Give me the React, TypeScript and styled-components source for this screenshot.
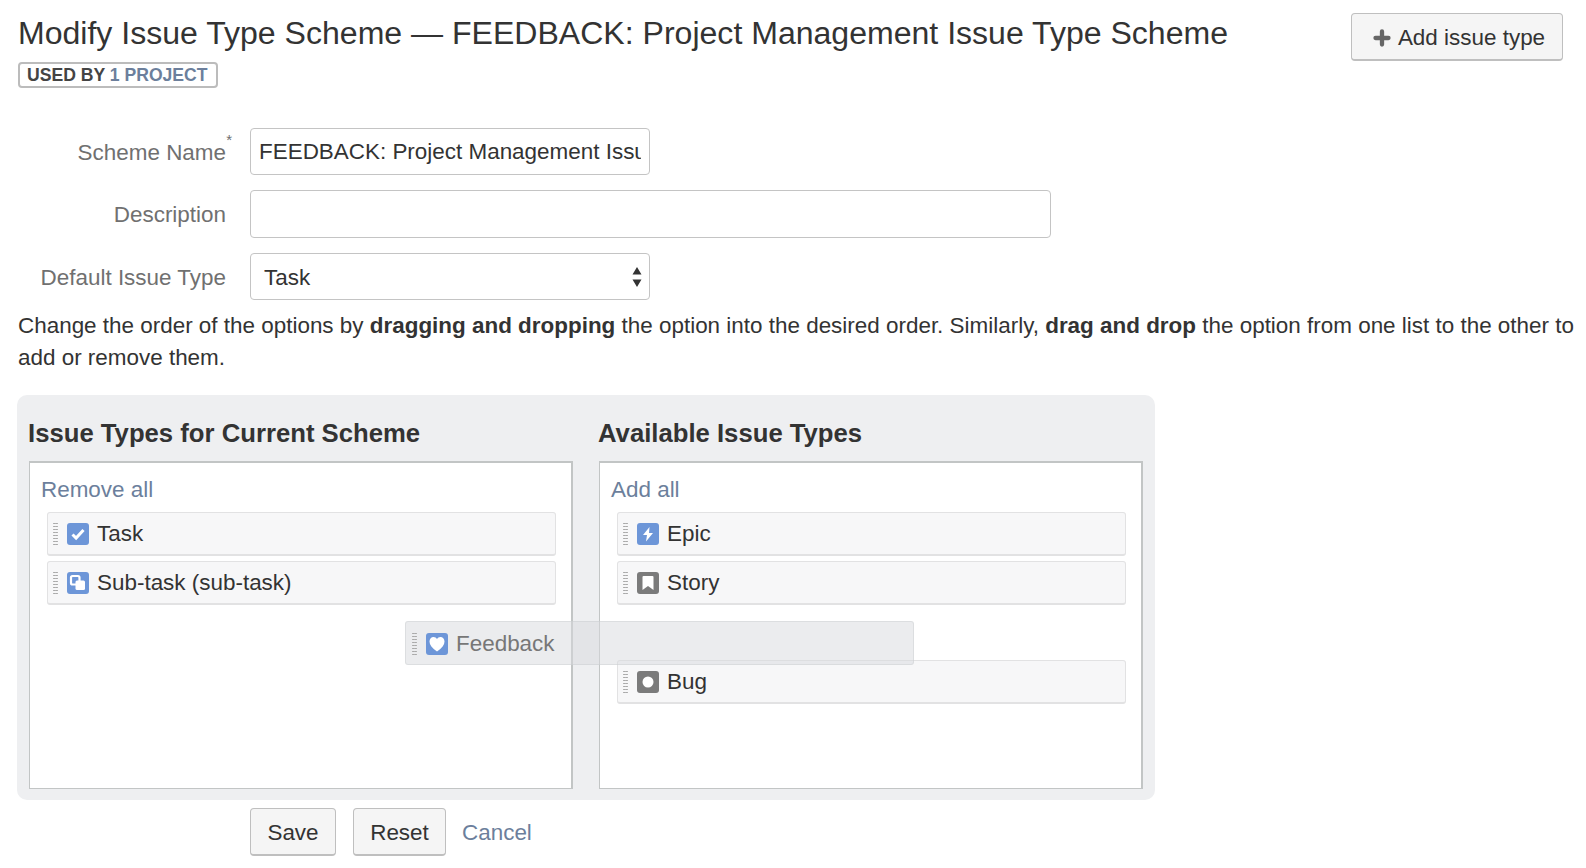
import React from "react";
import styled, { createGlobalStyle } from "styled-components";

const Global = createGlobalStyle`
  html, body { margin: 0; padding: 0; background: #fff; }
  body { font-family: "Liberation Sans", Arial, sans-serif; font-size: 22.45px; line-height: 32px; color: #333; }
  * { box-sizing: border-box; }
`;

const Page = styled.div`
  width: 1586px;
  height: 868px;
  overflow: hidden;
  padding: 13px 8px 0 17px;
`;

const Header = styled.header`
  display: flex;
  justify-content: space-between;
  align-items: flex-start;
  height: 88px;
  margin-right: 15px;
`;

const TitleBlock = styled.div`
  display: flex;
  flex-direction: column;
  align-items: flex-start;
`;

const Title = styled.h1`
  margin: 0 0 0 1px;
  font-size: 32.05px;
  line-height: 40px;
  font-weight: 400;
  color: #333;
`;

const Badge = styled.div`
  margin: 9px 0 0 1px;
  height: 26px;
  width: 200px;
  border: 2px solid #bcbcbc;
  border-radius: 4px;
  font-size: 17.6px;
  line-height: 22px;
  font-weight: 700;
  padding-left: 7px;
  color: #444;
  white-space: nowrap;
`;

const BadgeLink = styled.span`
  color: #6c7f9c;
`;

const Button = styled.button<{ $w: number }>`
  width: ${(p) => p.$w}px;
  height: 48px;
  border: 1px solid #bfbfbf;
  border-bottom-width: 2px;
  border-radius: 4px;
  background: #f5f5f5;
  font: 400 22.45px "Liberation Sans", Arial, sans-serif;
  color: #333;
  padding: 2px 0 0;
  display: inline-flex;
  align-items: center;
  justify-content: center;
  gap: 7px;
`;

const AddButton = styled(Button)`
  padding-left: 4px;
`;

const Form = styled.form`
  margin-top: 27px;
  display: grid;
  grid-template-columns: 209px auto;
  column-gap: 24px;
  row-gap: 15px;
  justify-content: start;
`;

const Label = styled.label`
  text-align: right;
  height: 47px;
  line-height: 49px;
  color: #707070;
  position: relative;
  white-space: nowrap;
`;

const Star = styled.sup`
  position: absolute;
  right: -6px;
  top: 0;
  font-size: 15px;
  line-height: 24px;
  vertical-align: baseline;
`;

const TextInput = styled.input<{ $w: number; $h: number }>`
  width: ${(p) => p.$w}px;
  height: ${(p) => p.$h}px;
  border: 1px solid #c4c4c4;
  border-radius: 4px;
  background: #fff;
  padding: 1px 8px 0;
  font: 400 22.45px "Liberation Sans", Arial, sans-serif;
  color: #333;
  outline: none;
`;

const SelectWrap = styled.div`
  position: relative;
  width: 400px;
  height: 47px;
`;

const Select = styled.select`
  width: 100%;
  height: 100%;
  appearance: none;
  border: 1px solid #c4c4c4;
  border-radius: 4px;
  background: #fff;
  padding: 1px 0 0 13px;
  font: 400 22.45px "Liberation Sans", Arial, sans-serif;
  color: #333;
  outline: none;
`;

const Arrows = styled.svg`
  position: absolute;
  right: 7px;
  top: 13px;
  pointer-events: none;
`;

const Help = styled.p`
  margin: 10px 0 0 1px;
  line-height: 32px;
  color: #333;
`;

const Panel = styled.section`
  position: relative;
  margin-top: 21px;
  width: 1138px;
  height: 405px;
  background: #eeeff1;
  border-radius: 10px;
  padding: 0 12px;
  display: grid;
  grid-template-columns: 544px 544px;
  column-gap: 26px;
`;

const Column = styled.div`
  display: flex;
  flex-direction: column;
`;

const ColumnTitle = styled.h2`
  margin: 0 0 0 -1px;
  height: 66px;
  padding-top: 22px;
  font-size: 25.7px;
  line-height: 32px;
  font-weight: 700;
  color: #333;
`;

const ListBox = styled.div`
  height: 328px;
  background: #fff;
  border-style: solid;
  border-color: #c2c5c5;
  border-width: 2px 2px 1px 1px;
  padding: 12px 15px 0 17px;
`;

const BulkLink = styled.a`
  display: block;
  margin-left: -6px;
  height: 37px;
  line-height: 30px;
  color: #6c7f9c;
`;

const Item = styled.div<{ $after?: number }>`
  height: 44px;
  margin-bottom: ${(p) => p.$after ?? 5}px;
  background: #f7f7f8;
  border: 1px solid #e2e2e3;
  border-bottom-width: 2px;
  border-radius: 3px;
  display: flex;
  align-items: center;
  padding: 1px 0 0 5px;
  color: #333;
`;

const Handle = styled.span`
  width: 5px;
  height: 24px;
  margin-right: 9px;
  background-image: radial-gradient(circle, #a5a5a5 0.8px, transparent 1px);
  background-size: 2.5px 3px;
`;

const IconBox = styled.svg`
  flex: none;
  margin-right: 8px;
`;

const Dragged = styled.div`
  position: absolute;
  left: 388px;
  top: 226px;
  width: 509px;
  height: 44px;
  background: rgba(215, 217, 221, 0.5);
  border: 1px solid rgba(200, 202, 206, 0.4);
  border-radius: 3px;
  display: flex;
  align-items: center;
  padding: 1px 0 0 6px;
  color: #777;
`;

const Actions = styled.div`
  margin: 8px 0 0 233px;
  display: flex;
  align-items: center;
`;

const ResetButton = styled(Button)`
  margin-left: 17px;
`;

const CancelLink = styled.a`
  margin-left: 16px;
  padding-top: 1px;
  color: #6c7f9c;
`;

const BLUE = "#6d96d8";
const GREY = "#7b7b7b";

const Icon: React.FC<{ fill: string; children: React.ReactNode }> = ({ fill, children }) => (
  <IconBox width="22" height="22" viewBox="0 0 22 22">
    <rect width="22" height="22" rx="3" fill={fill} />
    {children}
  </IconBox>
);

const TaskIcon = () => (
  <Icon fill={BLUE}>
    <path d="M5.5 11.5l3.6 3.6L16.5 7" fill="none" stroke="#fff" strokeWidth="3" />
  </Icon>
);
const SubtaskIcon = () => (
  <Icon fill={BLUE}>
    <rect x="4" y="4" width="8.5" height="8.5" rx="1.5" fill="none" stroke="#fff" strokeWidth="2.2" />
    <rect x="8.5" y="8.5" width="9.5" height="9.5" rx="1.5" fill="#fff" />
  </Icon>
);
const EpicIcon = () => (
  <Icon fill={BLUE}>
    <path d="M12.5 4L6 12h4l-1 6.5L16 10h-4z" fill="#fff" />
  </Icon>
);
const StoryIcon = () => (
  <Icon fill={GREY}>
    <path d="M6.5 4h9a1 1 0 0 1 1 1v13L11 14l-5.5 4V5a1 1 0 0 1 1-1z" fill="#fff" />
  </Icon>
);
const BugIcon = () => (
  <Icon fill={GREY}>
    <circle cx="11" cy="11" r="5.5" fill="#fff" />
  </Icon>
);
const HeartIcon = () => (
  <Icon fill={BLUE}>
    <path d="M11 18.5C6 15 3.5 12 3.5 8.5 3.5 6 5.3 4 7.6 4 9 4 10.3 4.8 11 6c.7-1.2 2-2 3.4-2 2.3 0 4.1 2 4.1 4.500 0 3.500-2.500 6.500-7.500 10z" fill="#fff" />
  </Icon>
);

const Row: React.FC<{ icon: React.ReactNode; label: string; after?: number }> = ({ icon, label, after }) => (
  <Item $after={after}>
    <Handle />
    {icon}
    {label}
  </Item>
);

export default function App() {
  return (
    <Page>
      <Global />
      <Header>
        <TitleBlock>
          <Title>Modify Issue Type Scheme — FEEDBACK: Project Management Issue Type Scheme</Title>
          <Badge>
            USED BY <BadgeLink>1 PROJECT</BadgeLink>
          </Badge>
        </TitleBlock>
        <AddButton type="button" $w={212}>
          <svg width="18" height="18" viewBox="0 0 18 18">
            <path d="M9 2.5v13M2.5 9h13" stroke="#666" strokeWidth="4.3" strokeLinecap="round" />
          </svg>
          Add issue type
        </AddButton>
      </Header>

      <Form>
        <Label>
          Scheme Name<Star>*</Star>
        </Label>
        <TextInput $w={400} $h={47} readOnly defaultValue="FEEDBACK: Project Management Issue Type Scheme" />
        <Label>Description</Label>
        <TextInput $w={801} $h={48} readOnly defaultValue="" />
        <Label>Default Issue Type</Label>
        <SelectWrap>
          <Select defaultValue="Task">
            <option>Task</option>
          </Select>
          <Arrows width="12" height="22" viewBox="0 0 12 22">
            <path d="M6 1l4.5 7.5h-9zM6 21l-4.5-7.5h9z" fill="#333" />
          </Arrows>
        </SelectWrap>
      </Form>

      <Help>
        Change the order of the options by <b>dragging and dropping</b> the option into the desired order. Similarly,{" "}
        <b>drag and drop</b> the option from one list to the other to add or remove them.
      </Help>

      <Panel>
        <Column>
          <ColumnTitle>Issue Types for Current Scheme</ColumnTitle>
          <ListBox>
            <BulkLink>Remove all</BulkLink>
            <Row icon={<TaskIcon />} label="Task" />
            <Row icon={<SubtaskIcon />} label="Sub-task (sub-task)" />
          </ListBox>
        </Column>
        <Column>
          <ColumnTitle>Available Issue Types</ColumnTitle>
          <ListBox>
            <BulkLink>Add all</BulkLink>
            <Row icon={<EpicIcon />} label="Epic" />
            <Row icon={<StoryIcon />} label="Story" after={55} />
            <Row icon={<BugIcon />} label="Bug" />
          </ListBox>
        </Column>
        <Dragged>
          <Handle />
          <HeartIcon />
          Feedback
        </Dragged>
      </Panel>

      <Actions>
        <Button type="button" $w={86}>Save</Button>
        <ResetButton type="button" $w={93}>Reset</ResetButton>
        <CancelLink>Cancel</CancelLink>
      </Actions>
    </Page>
  );
}
